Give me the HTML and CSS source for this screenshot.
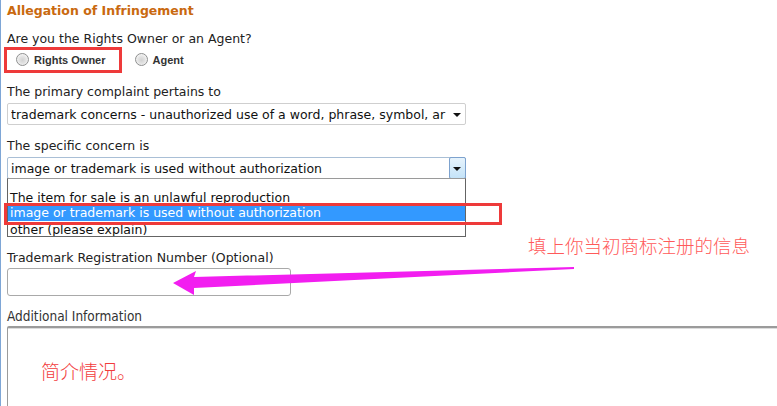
FILE: index.html
```html
<!DOCTYPE html>
<html>
<head>
<meta charset="utf-8">
<link rel="stylesheet" href="styles.css">
</head>
<body>
<div class="page">
  <h2 class="title">Allegation of Infringement</h2>

  <div class="label q">Are you the Rights Owner or an Agent?</div>
  <div class="radios">
    <label class="radio first"><span class="dot"></span>Rights Owner</label>
    <label class="radio"><span class="dot"></span>Agent</label>
    <span class="mark mark-owner"></span>
  </div>

  <div class="label l1">The primary complaint pertains to</div>
  <div class="select">
    <span class="sel-text">trademark concerns - unauthorized use of a word, phrase, symbol, ar</span>
    <span class="caret"></span>
  </div>

  <div class="label l2">The specific concern is</div>
  <div class="combo-wrap">
    <div class="select focused">
      <span class="sel-text">image or trademark is used without authorization</span>
      <span class="btn"><span class="caret"></span></span>
    </div>
    <div class="list">
      <div class="opt">The item for sale is an unlawful reproduction</div>
      <div class="opt hl">image or trademark is used without authorization</div>
      <div class="opt">other (please explain)</div>
    </div>
    <span class="mark mark-opt"></span>
  </div>

  <div class="label l3">Trademark Registration Number (Optional)</div>
  <div class="input"></div>

  <div class="label small l4">Additional Information</div>
  <div class="textarea"><span class="note">简介情况。</span></div>

  <div class="note-top">填上你当初商标注册的信息</div>
  <svg class="arrow" width="777" height="406" viewBox="0 0 777 406">
    <polygon points="173,283 196,271 194,277 574,267 574,269 194,288 194,295" fill="#f21ef0"/>
  </svg>
</div>
</body>
</html>
```
FILE: styles.css
```css
html, body {
  margin: 0;
  padding: 0;
  background: #fff;
  overflow: hidden;
}
body {
  width: 777px;
  height: 406px;
  font-family: "DejaVu Sans", Verdana, sans-serif;
  font-size: 12.5px;
  color: #222;
}
.page {
  position: relative;
  height: 406px;
  border-left: 1px solid #7ea6d6;
  padding-left: 6px;
  box-sizing: border-box;
}
.title {
  margin: 0;
  padding-top: 4px;
  font-size: 12.5px;
  line-height: 14px;
  font-weight: bold;
  color: #c9690f;
}
.label {
  line-height: 14px;
  white-space: nowrap;
}
.q { margin-top: 14px; }
.radios {
  position: relative;
  margin-top: 1px;
  height: 25px;
  display: flex;
  align-items: center;
  font-family: "Liberation Sans", Arial, sans-serif;
  font-size: 11px;
  font-weight: bold;
  color: #333;
}
.radio {
  display: flex;
  align-items: center;
}
.radio.first { margin-left: 9px; margin-right: 29px; }
.dot {
  width: 11px;
  height: 11px;
  border-radius: 50%;
  border: 1px solid #8e8f8f;
  background: radial-gradient(circle at 50% 55%, #d2d2d2 0, #e2e2e2 40%, #f5f5f5 75%, #fff 100%);
  margin-right: 5px;
}
.mark {
  position: absolute;
  border: 3px solid #ee3a3a;
  box-sizing: border-box;
}
.mark-owner {
  left: -3px;
  top: 0;
  width: 118px;
  height: 26px;
}
.l1 { margin-top: 13px; }
.select {
  position: relative;
  margin-top: 4px;
  width: 459px;
  height: 22px;
  box-sizing: border-box;
  border: 1px solid #cfcfcf;
  border-radius: 2px;
  background: #fff;
  display: flex;
  align-items: center;
  padding-left: 3px;
}
.sel-text {
  white-space: nowrap;
  overflow: hidden;
  width: 438px;
  color: #111;
}
.caret {
  position: absolute;
  right: 4px;
  top: 9px;
  width: 0;
  height: 0;
  border-left: 4px solid transparent;
  border-right: 4px solid transparent;
  border-top: 4px solid #111;
}
.l2 { margin-top: 14px; }
.combo-wrap {
  position: relative;
}
.select.focused {
  border-color: #a9bfd6;
}
.btn {
  position: absolute;
  right: -1px;
  top: -1px;
  width: 17px;
  height: 22px;
  box-sizing: border-box;
  border: 1px solid #7da2ce;
  border-radius: 2px;
  background: linear-gradient(#e6f3fc, #c4e3f8);
}
.btn .caret { right: 4px; top: 9px; }
.list {
  position: absolute;
  left: 0;
  top: 21px;
  width: 459px;
  height: 59px;
  box-sizing: border-box;
  border: 1px solid #646464;
  border-top-color: #9a9a9a;
  background: #fff;
  padding-top: 10px;
  overflow: hidden;
}
.opt {
  height: 16px;
  line-height: 17px;
  padding-left: 2px;
  white-space: nowrap;
  color: #111;
}
.opt.hl {
  background: #3399ff;
  color: #fff;
  line-height: 16px;
}
.mark-opt {
  left: -3px;
  top: 46px;
  width: 498px;
  height: 22px;
}
.l3 { margin-top: 72px; }
.input {
  margin-top: 3px;
  width: 284px;
  height: 28px;
  box-sizing: border-box;
  border: 1px solid #a9a9a9;
  border-radius: 3px;
  background: #fff;
}
.small {
  font-family: "DejaVu Sans Condensed", "DejaVu Sans", sans-serif;
  font-size: 13.5px;
  color: #333;
}
.l4 { margin-top: 13px; }
.textarea {
  margin-top: 3px;
  width: 800px;
  height: 100px;
  box-sizing: border-box;
  border-top: 2px solid #9b9b9b;
  border-left: 1px solid #9b9b9b;
  border-radius: 2px 0 0 0;
  box-shadow: inset 0 1px 0 #dcdcdc;
  padding: 33px 0 0 33px;
}
.note {
  font-family: "Noto Sans CJK SC", sans-serif;
  font-weight: 300;
  font-size: 19px;
  line-height: 20px;
  color: #f23c3c;
}
.note-top {
  position: absolute;
  left: 527px;
  top: 234px;
  font-family: "Noto Sans CJK SC", sans-serif;
  font-weight: 300;
  font-size: 18.5px;
  line-height: 22px;
  color: #ff5a5a;
  white-space: nowrap;
}
.arrow {
  position: absolute;
  left: -1px;
  top: 0;
  pointer-events: none;
}
```
